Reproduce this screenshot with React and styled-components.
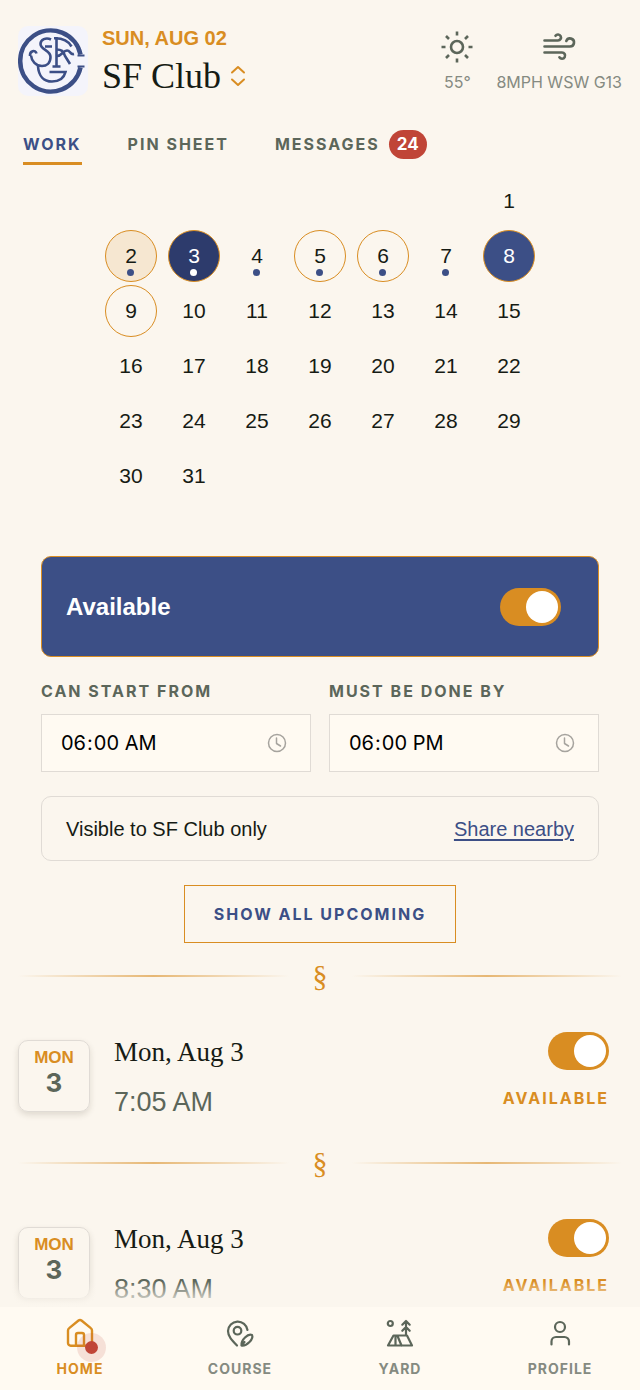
import { useState } from "react";
import styled, { createGlobalStyle, css } from "styled-components";

const GlobalStyle = createGlobalStyle`
  :root {
    --color-page: #fbf6ee;
    --color-surface: #fffaf2;
    --color-navy: #3c4f86;
    --color-navy-dark: #2d3b6c;
    --color-gold: #d98d22;
    --color-gold-soft: #f6e7d1;
    --color-red: #c04537;
    --color-ink: #161b14;
    --color-moss: #5c665a;
    --color-moss-light: #858a81;
    --color-line: #e0dbd5;
    --font-sans: "Liberation Sans", Arial, sans-serif;
    --font-caps: Inter, "Liberation Sans", sans-serif;
    --font-serif: "Liberation Serif", serif;
  }

  * {
    box-sizing: border-box;
  }

  body {
    margin: 0;
    background-color: var(--color-page);
    color: var(--color-ink);
    font-family: var(--font-sans);
  }

  button,
  input {
    font: inherit;
    color: inherit;
  }

  button {
    padding: 0;
    border: none;
    background: none;
    cursor: pointer;
  }

  h1,
  h2,
  p {
    margin: 0;
    font-weight: 400;
  }
`;

const capsText = css`
  font-family: var(--font-caps);
  font-size: 16px;
  line-height: 20px;
  font-weight: 700;
  letter-spacing: 2px;
  text-transform: uppercase;
`;

const AppShell = styled.div`
  display: flex;
  flex-direction: column;
  height: 100vh;
`;

const Content = styled.main`
  flex: 1;
  min-height: 0;
  overflow-y: auto;
  scrollbar-width: none;
`;

const Header = styled.header`
  display: flex;
  align-items: flex-start;
  gap: 14px;
  padding: 26px 18px 0;
`;

const Logo = styled.svg`
  flex: none;
  width: 70px;
  height: 70px;
  border-radius: 10px;
  background-color: #f4f4fb;
`;

const HeaderTitle = styled.div`
  flex: 1;
`;

const Today = styled.p`
  font-size: 20px;
  line-height: 24px;
  font-weight: 700;
  color: var(--color-gold);
`;

const ClubButton = styled.button`
  display: flex;
  align-items: center;
  gap: 8px;
`;

const ClubName = styled.h1`
  font-family: var(--font-serif);
  font-size: 36px;
  line-height: 52px;
`;

const Weather = styled.div`
  display: flex;
  gap: 22px;
`;

const WeatherItem = styled.div`
  display: flex;
  flex-direction: column;
  align-items: center;
  gap: 6px;
  padding-top: 4px;
  color: var(--color-moss);
`;

const WeatherText = styled.span`
  font-family: var(--font-caps);
  font-size: 16px;
  line-height: 24px;
  color: var(--color-moss-light);
`;

const Tabs = styled.nav`
  display: flex;
  gap: 46px;
  padding: 27px 23px 0;
`;

const Tab = styled.button`
  ${capsText}
  display: flex;
  align-items: center;
  gap: 9px;
  height: 36px;
  padding-bottom: 3px;
  border-bottom: 3px solid transparent;
  color: var(--color-moss);

  ${(props) =>
    props.$active &&
    css`
      border-color: var(--color-gold);
      color: var(--color-navy);
    `}
`;

const Badge = styled.span`
  padding: 0 8px;
  border-radius: 15px;
  background-color: var(--color-red);
  color: #fff;
  font-size: 17px;
  line-height: 29px;
  letter-spacing: 0;
`;

const Calendar = styled.div`
  display: grid;
  grid-template-columns: repeat(7, 52px);
  justify-content: center;
  gap: 3px 11px;
  padding: 10px 0 54px;
`;

const dayStyles = {
  outlined: css`
    border-color: var(--color-gold);
  `,
  today: css`
    border-color: var(--color-gold);
    background-color: var(--color-gold-soft);
  `,
  booked: css`
    border-color: var(--color-gold);
    background-color: var(--color-navy-dark);
    color: #fff;
  `,
  selected: css`
    border-color: var(--color-gold);
    background-color: var(--color-navy);
    color: #fff;
  `,
};

const Day = styled.button`
  position: relative;
  height: 52px;
  border: 1px solid transparent;
  border-radius: 50%;
  font-size: 21px;
  line-height: 24px;
  ${(props) => dayStyles[props.$kind]}

  &:first-child {
    grid-column: 7;
  }
`;

const DayDot = styled.span`
  position: absolute;
  bottom: 5px;
  left: 50%;
  width: 7px;
  height: 7px;
  margin-left: -4px;
  border-radius: 50%;
  background-color: ${(props) => (props.$light ? "#fff" : "var(--color-navy)")};
`;

const Availability = styled.section`
  display: flex;
  flex-direction: column;
  gap: 24px;
  padding: 0 41px;
`;

const AvailableCard = styled.label`
  display: flex;
  align-items: center;
  justify-content: space-between;
  height: 101px;
  padding: 0 37px 0 24px;
  border: 1px solid var(--color-gold);
  border-radius: 10px;
  background-color: var(--color-navy);
  color: #fff;
  font-size: 24px;
  line-height: 32px;
  font-weight: 700;
`;

const Toggle = styled.input`
  appearance: none;
  flex: none;
  display: flex;
  align-items: center;
  width: 61px;
  height: 38px;
  margin: 0;
  padding: 0 3px;
  border-radius: 19px;
  background-color: #d2cec6;
  cursor: pointer;

  &::before {
    content: "";
    width: 32px;
    height: 32px;
    border-radius: 50%;
    background-color: #fff;
  }

  &:checked {
    justify-content: flex-end;
    background-color: var(--color-gold);
  }
`;

const TimeRow = styled.div`
  display: grid;
  grid-template-columns: 1fr 1fr;
  gap: 18px;
`;

const Field = styled.label`
  ${capsText}
  display: flex;
  flex-direction: column;
  gap: 13px;
  color: var(--color-moss);
`;

const TimeBox = styled.span`
  position: relative;
  display: block;
  color: #a6a39e;
`;

const TimeInput = styled.input`
  display: block;
  width: 100%;
  height: 58px;
  padding: 0 18px;
  border: 1px solid var(--color-line);
  border-radius: 0;
  background-color: var(--color-surface);
  color: #000;
  font-size: 20px;
  font-weight: 400;
  letter-spacing: 0;

  &::-webkit-calendar-picker-indicator {
    opacity: 0;
  }
`;

const ClockIcon = styled.svg`
  position: absolute;
  top: 19px;
  right: 24px;
  pointer-events: none;
`;

const Visibility = styled.div`
  display: flex;
  align-items: center;
  justify-content: space-between;
  height: 65px;
  padding: 0 24px;
  border: 1px solid var(--color-line);
  border-radius: 10px;
  font-size: 20px;
  line-height: 24px;
`;

const ShareLink = styled.a`
  color: var(--color-navy);
  text-underline-offset: 3px;
`;

const ShowAllButton = styled.button`
  ${capsText}
  align-self: center;
  height: 58px;
  padding: 0 29px;
  border: 1px solid var(--color-gold);
  color: var(--color-navy);
`;

const Divider = styled.div`
  display: grid;
  grid-template-columns: 1fr auto 1fr;
  align-items: center;
  gap: 24px;
  height: 40px;
  margin: 13px 18px 36px;
  color: var(--color-gold);
  font-family: var(--font-serif);
  font-size: 30px;
  line-height: 40px;

  &::before,
  &::after {
    content: "";
    height: 2px;
    opacity: 0.6;
    background: linear-gradient(
      to right,
      transparent,
      var(--color-gold),
      transparent
    );
  }
`;

const Shift = styled.article`
  display: flex;
  align-items: flex-start;
  gap: 24px;
  height: 98px;
  padding: 0 31px 0 18px;
`;

const DateTile = styled.div`
  flex: none;
  width: 72px;
  height: 72px;
  margin-top: 8px;
  padding-top: 6px;
  border: 1px solid var(--color-line);
  border-radius: 10px;
  box-shadow: 0 3px 6px rgba(60, 50, 30, 0.14);
  text-align: center;
`;

const TileWeekday = styled.p`
  font-size: 17px;
  line-height: 22px;
  font-weight: 700;
  color: var(--color-gold);
`;

const TileDay = styled.p`
  font-family: var(--font-caps);
  font-size: 26px;
  line-height: 28px;
  font-weight: 700;
  color: var(--color-moss);
`;

const ShiftInfo = styled.div`
  flex: 1;
`;

const ShiftDate = styled.h2`
  font-family: var(--font-serif);
  font-size: 27px;
  line-height: 40px;
`;

const ShiftTime = styled.p`
  margin-top: 10px;
  font-size: 27px;
  line-height: 40px;
  color: var(--color-moss);
`;

const ShiftToggle = styled.label`
  ${capsText}
  display: flex;
  flex-direction: column;
  align-items: flex-end;
  gap: 18px;
  color: var(--color-gold);
`;

const BottomNav = styled.nav`
  position: relative;
  display: grid;
  grid-template-columns: repeat(4, 1fr);
  height: 83px;
  background-color: var(--color-surface);

  /* content fades out as it slides under the bar */
  &::before {
    content: "";
    position: absolute;
    right: 0;
    bottom: 100%;
    left: 0;
    height: 26px;
    background: linear-gradient(to top, var(--color-page), transparent);
    pointer-events: none;
  }
`;

const NavLink = styled.a`
  display: flex;
  flex-direction: column;
  align-items: center;
  gap: 9px;
  padding-top: 11px;
  color: ${(props) =>
    props.$active ? "var(--color-gold)" : "var(--color-moss)"};
  text-decoration: none;
`;

const NavIcon = styled.span`
  position: relative;
  height: 32px;
`;

const NavLabel = styled.span`
  font-family: var(--font-caps);
  font-size: 14px;
  line-height: 20px;
  font-weight: 700;
  letter-spacing: 1px;
  text-transform: uppercase;
  color: ${(props) =>
    props.$active ? "var(--color-gold)" : "var(--color-moss-light)"};
`;

const NavDot = styled.span`
  position: absolute;
  right: -10px;
  bottom: -12px;
  width: 29px;
  height: 29px;
  border: 8px solid rgba(192, 69, 55, 0.14);
  border-radius: 50%;
  background-color: var(--color-red);
  background-clip: padding-box;
`;

const strokeProps = {
  fill: "none",
  stroke: "currentColor",
  strokeLinecap: "round",
  strokeLinejoin: "round",
  "aria-hidden": true,
};

function ClubLogo() {
  return (
    <Logo viewBox="0 0 70 70" role="img" aria-label="SF Club logo">
      <g fill="none" stroke="#3c4f86" strokeWidth="2.600">
        <path strokeWidth="4.500" d="M62.500 28.500A30.500 30.500 0 1 0 62.500 41.500" />
        <path strokeWidth="2.200" d="M59.500 29.500h7M59.500 40.500h7" />
        {/* S */}
        <path d="M33 13.500c-5-2.500-10.500 0-10.500 4.500 0 6 10 6 10 13 0 6-4 9-8.500 9-6 0-10.500-5-11-10.500" />
        <path d="M18.500 27.500c-1-4-7-3-6.500 2.500M27 20.500h7" />
        {/* F */}
        <path d="M38.500 11v29M34.500 40.500h8" />
        <path d="M36 12.300c8-.3 14 2 17.500 8.200M38.500 23.500c5 0 7 1.500 8.500 6.500l5 8" />
        <path d="M39 30c5 0 6-5.500 10-5.500 3.500 0 3 4.500 7 3.500" />
        {/* G */}
        <path d="M20 40c.5 10 6 15.500 14 15.500 7 0 12-3.500 13.500-9.500H31.500" />
      </g>
    </Logo>
  );
}

function SortIcon() {
  return (
    <svg width="18" height="24" viewBox="0 0 18 24" strokeWidth="2" {...strokeProps} stroke="#d98d22">
      <path d="M3 8.500 9 3l6 5.500M3 15.500 9 21l6-5.500" />
    </svg>
  );
}

function SunIcon() {
  return (
    <svg width="34" height="34" viewBox="0 0 34 34" strokeWidth="2.600" {...strokeProps} strokeLinecap="butt">
      <circle cx="17" cy="17" r="6" />
      <path d="M17 1.500v4M17 28.500v4M1.500 17h4M28.500 17h4M6 6l3 3M25 25l3 3M6 28l3-3M25 9l3-3" />
    </svg>
  );
}

function WindIcon() {
  return (
    <svg width="34" height="34" viewBox="0 0 34 34" strokeWidth="2.600" {...strokeProps}>
      <path d="M2.500 10.500h13.500a3 3 0 1 0-2.500-4.700" />
      <path d="M2.500 16.500h25.500a4 4 0 1 0-3.700-5.500" />
      <path d="M2.500 22.500h17.500a3.100 3.100 0 1 1-2.600 4.800" />
    </svg>
  );
}

function HomeIcon() {
  return (
    <svg width="32" height="32" viewBox="0 0 32 32" strokeWidth="2.400" {...strokeProps}>
      <path d="M4 12.500V25a2.700 2.700 0 0 0 2.700 2.700h18.600A2.700 2.700 0 0 0 28 25V12.500a3 3 0 0 0-1.200-2.400L17.500 2.500a2.400 2.400 0 0 0-3 0L5.200 10.100A3 3 0 0 0 4 12.500Z" />
      <path d="M12 27.500V17a2 2 0 0 1 2-2h4a2 2 0 0 1 2 2v10.500" />
    </svg>
  );
}

function CourseIcon() {
  return (
    <svg width="32" height="32" viewBox="0 0 32 32" strokeWidth="2.200" {...strokeProps}>
      <path d="M13 27.500C8 22.500 4 18.500 4 13a9.800 9.800 0 0 1 19.500-1" />
      <circle cx="13.500" cy="12.700" r="3.800" />
      <path d="M17.500 27.500c-.5-3 1-5.500 3.500-8 2.500-2.500 5-3.500 7-2.500 1 2 0 4.500-2.500 7s-5 4-8 3.500Zm0 0 3-3.500" />
    </svg>
  );
}

function YardIcon() {
  return (
    <svg width="32" height="32" viewBox="0 0 32 32" strokeWidth="2.200" {...strokeProps}>
      <circle cx="6.300" cy="5.500" r="2.500" />
      <path d="M22 17V3M18.300 6.700 22 3l3.700 3.700M18.300 12.800 22 9l3.700 3.800" />
      <path d="M9.500 17.500h13.500L28 27.500H4ZM11.500 17.500v10M13.500 18l4 9.500" />
    </svg>
  );
}

function ProfileIcon() {
  return (
    <svg width="32" height="32" viewBox="0 0 32 32" strokeWidth="2.200" {...strokeProps}>
      <circle cx="16" cy="9" r="5" />
      <path d="M7.500 26.500v-3a4.500 4.500 0 0 1 4.500-4.500h8.500a4.500 4.500 0 0 1 4.500 4.500v3" />
    </svg>
  );
}

const tabs = [
  { name: "Work" },
  { name: "Pin sheet" },
  { name: "Messages", count: 24 },
];

const dayKinds = {
  2: "today",
  3: "booked",
  5: "outlined",
  6: "outlined",
  8: "selected",
  9: "outlined",
};

const daysWithJobs = [2, 3, 4, 5, 6, 7];

const days = Array.from({ length: 31 }, (_, i) => i + 1);

const shifts = [
  { id: 1, weekday: "MON", day: 3, date: "Mon, Aug 3", time: "7:05 AM" },
  { id: 2, weekday: "MON", day: 3, date: "Mon, Aug 3", time: "8:30 AM" },
];

const navItems = [
  { name: "Home", Icon: HomeIcon, alert: true },
  { name: "Course", Icon: CourseIcon },
  { name: "Yard", Icon: YardIcon },
  { name: "Profile", Icon: ProfileIcon },
];

function TimeField({ label, value }) {
  return (
    <Field>
      {label}
      <TimeBox>
        <TimeInput type="time" defaultValue={value} />
        <ClockIcon width="20" height="20" viewBox="0 0 20 20" strokeWidth="1.500" {...strokeProps}>
          <circle cx="10" cy="10" r="8.500" />
          <path d="M9.500 5v5.500l4 2.500" />
        </ClockIcon>
      </TimeBox>
    </Field>
  );
}

function ShiftCard({ shift }) {
  return (
    <Shift>
      <DateTile>
        <TileWeekday>{shift.weekday}</TileWeekday>
        <TileDay>{shift.day}</TileDay>
      </DateTile>
      <ShiftInfo>
        <ShiftDate>{shift.date}</ShiftDate>
        <ShiftTime>{shift.time}</ShiftTime>
      </ShiftInfo>
      <ShiftToggle>
        <Toggle type="checkbox" role="switch" defaultChecked />
        Available
      </ShiftToggle>
    </Shift>
  );
}

function App() {
  const [activeTab, setActiveTab] = useState("Work");

  return (
    <AppShell>
      <GlobalStyle />
      <Content>
        <Header>
          <ClubLogo />
          <HeaderTitle>
            <Today>SUN, AUG 02</Today>
            <ClubButton>
              <ClubName>SF Club</ClubName>
              <SortIcon />
            </ClubButton>
          </HeaderTitle>
          <Weather>
            <WeatherItem>
              <SunIcon />
              <WeatherText>55°</WeatherText>
            </WeatherItem>
            <WeatherItem>
              <WindIcon />
              <WeatherText>8MPH WSW G13</WeatherText>
            </WeatherItem>
          </Weather>
        </Header>

        <Tabs>
          {tabs.map((tab) => (
            <Tab
              key={tab.name}
              $active={tab.name === activeTab}
              onClick={() => setActiveTab(tab.name)}
            >
              {tab.name}
              {tab.count && <Badge>{tab.count}</Badge>}
            </Tab>
          ))}
        </Tabs>

        <Calendar>
          {days.map((day) => (
            <Day key={day} $kind={dayKinds[day]}>
              {day}
              {daysWithJobs.includes(day) && (
                <DayDot $light={dayKinds[day] === "booked"} />
              )}
            </Day>
          ))}
        </Calendar>

        <Availability>
          <AvailableCard>
            Available
            <Toggle type="checkbox" role="switch" defaultChecked />
          </AvailableCard>
          <TimeRow>
            <TimeField label="Can start from" value="06:00" />
            <TimeField label="Must be done by" value="18:00" />
          </TimeRow>
          <Visibility>
            Visible to SF Club only
            <ShareLink href="#share">Share nearby</ShareLink>
          </Visibility>
          <ShowAllButton>Show all upcoming</ShowAllButton>
        </Availability>

        {shifts.map((shift) => (
          <div key={shift.id}>
            <Divider>§</Divider>
            <ShiftCard shift={shift} />
          </div>
        ))}
      </Content>

      <BottomNav>
        {navItems.map(({ name, Icon, alert }) => (
          <NavLink key={name} href={`#${name}`} $active={name === "Home"}>
            <NavIcon>
              <Icon />
              {alert && <NavDot />}
            </NavIcon>
            <NavLabel $active={name === "Home"}>{name}</NavLabel>
          </NavLink>
        ))}
      </BottomNav>
    </AppShell>
  );
}

export default App;
